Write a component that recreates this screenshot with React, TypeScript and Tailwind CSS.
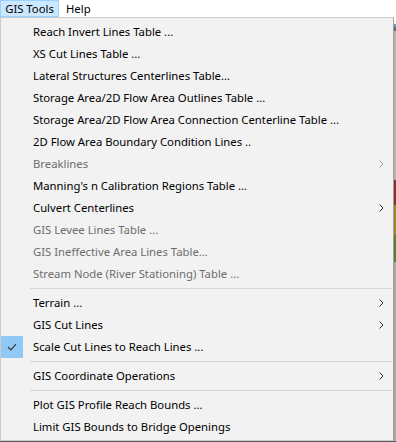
import React from 'react';

type Item =
  | { kind: 'sep' }
  | { kind: 'item'; label: string; disabled?: boolean; submenu?: boolean; checked?: boolean };

const items: Item[] = [
  { kind: 'item', label: 'Reach Invert Lines Table ...' },
  { kind: 'item', label: 'XS Cut Lines Table ...' },
  { kind: 'item', label: 'Lateral Structures Centerlines Table...' },
  { kind: 'item', label: 'Storage Area/2D Flow Area Outlines Table ...' },
  { kind: 'item', label: 'Storage Area/2D Flow Area Connection Centerline Table ...' },
  { kind: 'item', label: '2D Flow Area Boundary Condition Lines ..' },
  { kind: 'item', label: 'Breaklines', disabled: true, submenu: true },
  { kind: 'item', label: "Manning's n Calibration Regions Table ..." },
  { kind: 'item', label: 'Culvert Centerlines', submenu: true },
  { kind: 'item', label: 'GIS Levee Lines Table ...', disabled: true },
  { kind: 'item', label: 'GIS Ineffective Area Lines Table...', disabled: true },
  { kind: 'item', label: 'Stream Node (River Stationing) Table ...', disabled: true },
  { kind: 'sep' },
  { kind: 'item', label: 'Terrain ...', submenu: true },
  { kind: 'item', label: 'GIS Cut Lines', submenu: true },
  { kind: 'item', label: 'Scale Cut Lines to Reach Lines ...', checked: true },
  { kind: 'sep' },
  { kind: 'item', label: 'GIS Coordinate Operations', submenu: true },
  { kind: 'sep' },
  { kind: 'item', label: 'Plot GIS Profile Reach Bounds ...' },
  { kind: 'item', label: 'Limit GIS Bounds to Bridge Openings' },
];

const Chevron = ({ disabled }: { disabled?: boolean }) => (
  <svg width="5" height="8" viewBox="0 0 5 8" className="shrink-0">
    <path d="M0.5 0.5 L4 4 L0.5 7.5" fill="none" stroke={disabled ? '#a0a0a0' : '#333333'} strokeWidth="1" />
  </svg>
);

const Check = () => (
  <svg width="10" height="8" viewBox="0 0 10 8">
    <path d="M1 4 L3.8 6.8 L9 1.2" fill="none" stroke="#333333" strokeWidth="1.2" />
  </svg>
);

export default function App() {
  return (
    <div
      className="w-[396px] h-[442px] bg-white overflow-hidden relative text-[11.3px] text-black"
      style={{ fontFamily: '"Noto Sans", "Segoe UI", sans-serif' }}
    >
      {/* Menu bar */}
      <div className="h-[17px] flex items-stretch bg-white">
        <div className="w-[59px] bg-[#cce8ff] border border-[#99d1ff] flex items-center justify-center leading-none">GIS Tools</div>
        <div className="px-[7px] flex items-center leading-none">Help</div>
      </div>

      {/* Dropdown */}
      <div className="flex">
        <div className="w-[394px] h-[424px] bg-[#f2f2f2] border border-[#cccccc] border-r-[#a0a0a0] pt-[3px]">
          {items.map((it, i) =>
            it.kind === 'sep' ? (
              <div key={i} className="h-[7px] flex items-center pl-[29px] pr-[1px]">
                <div className="h-px w-full bg-[#d7d7d7]" />
              </div>
            ) : (
              <div key={i} className="h-[22px] flex items-center">
                <div className="w-[32px] h-full flex items-center">
                  {it.checked && (
                    <div className="w-[22px] h-[22px] bg-[#90c8f6] flex items-center justify-center">
                      <Check />
                    </div>
                  )}
                </div>
                <span className={`flex-1 whitespace-nowrap ${it.disabled ? 'text-[#6d6d6d]' : 'text-black'}`}>
                  {it.label}
                </span>
                <div className="w-[14px] flex items-center">{it.submenu && <Chevron disabled={it.disabled} />}</div>
              </div>
            )
          )}
        </div>
        {/* Map behind the menu */}
        <div className="flex-1 flex flex-col">
          <div className="h-[7px] bg-white" />
          <div className="h-[3px] bg-[#5fa3c4]" />
          <div className="h-[4px] bg-[#6a6a6a]" />
          <div className="h-[149px] bg-[#b4b4b4]" />
          <div className="h-[25px] bg-[#8b2f2a]" />
          <div className="h-[30px] bg-[#9a8a2c]" />
          <div className="h-[27px] bg-[#5f7d30]" />
          <div className="flex-1 bg-[#a8a8a8]" />
        </div>
      </div>
      <div className="h-px bg-[#555555]" />
    </div>
  );
}
